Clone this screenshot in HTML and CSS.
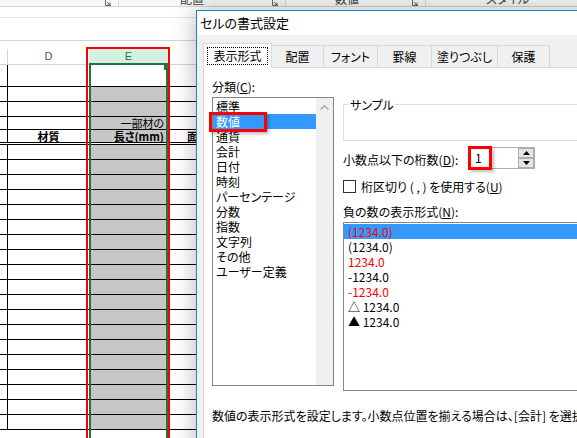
FILE: index.html
```html
<!DOCTYPE html>
<html lang="ja">
<head>
<meta charset="utf-8">
<link rel="stylesheet" href="styles.css">
</head>
<body>
<div class="ribbon">
  <div class="rgroup g1"><span class="launch"><svg width="6" height="6" viewBox="0 0 6 6"><path d="M0.5 0 V5.5 H6 M2 2 L5 5 M5 2.5 V5 H2.5" fill="none" stroke="#666" stroke-width="1"/></svg></span></div>
  <div class="rgroup g2"><span class="rlabel">配置</span><span class="launch"><svg width="6" height="6" viewBox="0 0 6 6"><path d="M0.5 0 V5.5 H6 M2 2 L5 5 M5 2.5 V5 H2.5" fill="none" stroke="#666" stroke-width="1"/></svg></span></div>
  <div class="rgroup g3"><span class="rlabel">数値</span><span class="launch"><svg width="6" height="6" viewBox="0 0 6 6"><path d="M0.5 0 V5.5 H6 M2 2 L5 5 M5 2.5 V5 H2.5" fill="none" stroke="#666" stroke-width="1"/></svg></span></div>
  <div class="rgroup g4"><span class="rlabel">スタイル</span></div>
</div>
<div class="fbar"></div>
<div class="fgap"></div>
<div class="hspace"></div>

<div class="sheet">
  <div class="hrow">
    <div class="hc"></div>
    <div class="hd">D</div>
    <div class="he">E</div>
    <div class="hf"></div>
  </div>
  <div class="row h21"><div class="c"></div><div class="d"></div><div class="e active"></div><div class="f"></div></div>
  <div class="row h14"><div class="c"></div><div class="d"></div><div class="e"></div><div class="f"></div></div>
  <div class="row h14"><div class="c"></div><div class="d"></div><div class="e"></div><div class="f"></div></div>
  <div class="row h12"><div class="c"></div><div class="d"></div><div class="e txt right">一部材の</div><div class="f"></div></div>
  <div class="row r5"><div class="c"></div><div class="d txt bold center">材質</div><div class="e txt bold right">長さ(mm)</div><div class="f txt bold fpad">面積</div></div>
  <div class="row h14"><div class="c"></div><div class="d"></div><div class="e"></div><div class="f"></div></div>
  <div class="row h14"><div class="c"></div><div class="d"></div><div class="e"></div><div class="f"></div></div>
  <div class="row h14"><div class="c"></div><div class="d"></div><div class="e"></div><div class="f"></div></div>
  <div class="row h14"><div class="c"></div><div class="d"></div><div class="e"></div><div class="f"></div></div>
  <div class="row h14"><div class="c"></div><div class="d"></div><div class="e"></div><div class="f"></div></div>
  <div class="row h14"><div class="c"></div><div class="d"></div><div class="e"></div><div class="f"></div></div>
  <div class="row h14"><div class="c"></div><div class="d"></div><div class="e"></div><div class="f"></div></div>
  <div class="row h14"><div class="c"></div><div class="d"></div><div class="e"></div><div class="f"></div></div>
  <div class="row h14"><div class="c"></div><div class="d"></div><div class="e"></div><div class="f"></div></div>
  <div class="row h14"><div class="c"></div><div class="d"></div><div class="e"></div><div class="f"></div></div>
  <div class="row h14"><div class="c"></div><div class="d"></div><div class="e"></div><div class="f"></div></div>
  <div class="row h14"><div class="c"></div><div class="d"></div><div class="e"></div><div class="f"></div></div>
  <div class="row h14"><div class="c"></div><div class="d"></div><div class="e"></div><div class="f"></div></div>
  <div class="row h14"><div class="c"></div><div class="d"></div><div class="e"></div><div class="f"></div></div>
  <div class="row h14"><div class="c"></div><div class="d"></div><div class="e"></div><div class="f"></div></div>
  <div class="row h14"><div class="c"></div><div class="d"></div><div class="e"></div><div class="f"></div></div>
  <div class="row h14"><div class="c"></div><div class="d"></div><div class="e"></div><div class="f"></div></div>
  <div class="row h14"><div class="c"></div><div class="d"></div><div class="e"></div><div class="f"></div></div>
  <div class="row h14"><div class="c"></div><div class="d"></div><div class="e"></div><div class="f"></div></div>
</div>
<div class="selbox"></div>
<div class="handle"></div>
<div class="mark mark-col"></div>

<div class="dialog">
  <div class="titlebar">セルの書式設定</div>
  <div class="dbody">
    <div class="tabs">
      <div class="tab tsel"><span class="focus">表示形式</span></div>
      <div class="tab w52">配置</div>
      <div class="tab w54">フォント</div>
      <div class="tab w54">罫線</div>
      <div class="tab w66">塗りつぶし</div>
      <div class="tab w52">保護</div>
    </div>
    <div class="panel">
      <div class="pgrid">
        <div class="lcol">
          <div class="lbl">分類(<u>C</u>):</div>
          <div class="catlist">
            <div class="catitems">
              <div class="ci">標準</div>
              <div class="ci ci-on">数値</div>
              <div class="ci">通貨</div>
              <div class="ci">会計</div>
              <div class="ci">日付</div>
              <div class="ci">時刻</div>
              <div class="ci">パーセンテージ</div>
              <div class="ci">分数</div>
              <div class="ci">指数</div>
              <div class="ci">文字列</div>
              <div class="ci">その他</div>
              <div class="ci">ユーザー定義</div>
            </div>
            <div class="vscroll"><svg width="9" height="5" viewBox="0 0 9 5"><path d="M0.5 4.5 L4.5 0.8 L8.5 4.5" fill="none" stroke="#a6a6a6" stroke-width="1.4"/></svg></div>
          </div>
        </div>
        <div class="rcol">
          <fieldset class="sample"><legend>サンプル</legend></fieldset>
          <div class="digits">
            <div class="dlbl">小数点以下の桁数(<u>D</u>):</div>
            <div class="spin">
              <div class="val">1</div>
              <div class="btns">
                <div class="sb"><svg width="7" height="4" viewBox="0 0 7 4"><path d="M0 4 L3.5 0 L7 4 Z" fill="#000"/></svg></div>
                <div class="sb"><svg width="7" height="4" viewBox="0 0 7 4"><path d="M0 0 L3.5 4 L7 0 Z" fill="#000"/></svg></div>
              </div>
            </div>
          </div>
          <div class="chk"><span class="box"></span><span>桁区切り ( , ) を使用する(<u>U</u>)</span></div>
          <div class="neglbl">負の数の表示形式(<u>N</u>):</div>
          <div class="neglist">
            <div class="it it-on red">(1234.0)</div>
            <div class="it">(1234.0)</div>
            <div class="it red">1234.0</div>
            <div class="it">-1234.0</div>
            <div class="it red">-1234.0</div>
            <div class="it">△ 1234.0</div>
            <div class="it">▲ 1234.0</div>
          </div>
        </div>
        <div class="desc">数値の表示形式を設定します。小数点位置を揃える場合は、[会計] を選択してください。</div>
      </div>
    </div>
  </div>
</div>

<div class="mark mark-num"></div>
<div class="mark mark-spin"></div>
</body>
</html>
```

FILE: styles.css
```css
html, body {
  margin: 0;
  padding: 0;
}
body {
  width: 577px;
  height: 438px;
  overflow: hidden;
  position: relative;
  background: #fff;
  font-family: "Noto Sans CJK JP", "Noto Sans", sans-serif;
  font-size: 12px;
  color: #000;
}

/* ribbon remnant */
.ribbon {
  height: 6px;
  display: flex;
  overflow: hidden;
  background: #f8f8f8;
  border-bottom: 1px solid #d5d5d5;
}
.rgroup {
  display: flex;
  align-items: flex-end;
  box-sizing: border-box;
  border-right: 1px solid #dadada;
}
.g1 { width: 119px; }
.g2 { width: 167px; padding-left: 61px; }
.g3 { width: 140px; padding-left: 49px; }
.g4 { flex: 1; padding-left: 60px; border-right: none; }
.rlabel {
  line-height: 14px;
  height: 14px;
  color: #444;
  font-size: 12px;
  white-space: nowrap;
  font-feature-settings: "palt";
}
.launch {
  margin-left: auto;
  margin-right: 7px;
  display: flex;
  align-items: flex-end;
  height: 6px;
}
.launch svg { display: block; }

.fbar {
  height: 10px;
  border-bottom: 1px solid #e3e3e3;
}
.fgap {
  height: 22px;
  border-bottom: 1px solid #d4d4d4;
}
.hspace { height: 8px; }

/* sheet */
.sheet {
  display: flex;
  flex-direction: column;
}
.hrow {
  display: flex;
  height: 16px;
}
.hrow > div {
  box-sizing: border-box;
  height: 16px;
  font-family: "Liberation Sans", Arial, sans-serif;
  font-size: 11px;
  line-height: 15px;
  text-align: center;
}
.hc {
  width: 8px;
  border-right: 1px solid #d4d4d4;
  border-bottom: 1px solid #d4d4d4;
}
.hd {
  width: 81px;
  color: #555;
  border-bottom: 1px solid #d4d4d4;
}
.he {
  width: 79px;
  background: #d3f0e0;
  color: #217346;
}
.hf {
  flex: 1;
  border-left: 1px solid #d4d4d4;
  border-bottom: 1px solid #d4d4d4;
}

.row {
  display: flex;
  border-bottom: 1px solid #000;
  flex-shrink: 0;
}
.h21 { height: 21px; }
.h14 { height: 14px; }
.h12 { height: 12px; }
.r5 { height: 12px; border-bottom: 3px double #000; }
.row > div { box-sizing: border-box; }
.c { width: 8px; border-right: 1px solid #000; }
.d { width: 81px; }
.e { width: 79px; background: #c6c6c6; }
.e.active { background: #fff; }
.f { flex: 1; }
.txt {
  font-size: 11px;
  line-height: 12px;
  white-space: nowrap;
  overflow: hidden;
  font-feature-settings: "palt";
}
.bold { font-weight: 700; }
.center { text-align: center; }
.right { text-align: right; padding-right: 4px; }
.fpad { padding-left: 19px; }

.selbox {
  position: absolute;
  left: 89px;
  top: 63px;
  width: 79px;
  height: 380px;
  box-sizing: border-box;
  border: 2px solid #217346;
  border-bottom: none;
}
.handle {
  position: absolute;
  left: 164px;
  top: 64px;
  width: 5px;
  height: 6px;
  background: #217346;
}

.mark {
  position: absolute;
  box-sizing: border-box;
  border: 2px solid #ff0000;
}
.mark-col {
  left: 86px;
  top: 47px;
  width: 84px;
  height: 400px;
}
.mark-num {
  left: 209px;
  top: 112px;
  width: 58px;
  height: 20px;
  border-width: 3px;
  box-shadow: 2px 2px 3px rgba(0, 0, 0, 0.25);
}
.mark-spin {
  left: 468px;
  top: 146px;
  width: 24px;
  height: 24px;
  border-width: 3px;
  box-shadow: 2px 2px 3px rgba(0, 0, 0, 0.25);
}

/* dialog */
.dialog {
  position: absolute;
  left: 196px;
  top: 10px;
  width: 420px;
  height: 440px;
  border-left: 1px solid #1883d7;
  border-top: 1px solid #1883d7;
  background: #f0f0f0;
  box-shadow: 0 0 22px rgba(0, 0, 0, 0.3);
  font-feature-settings: "palt";
}
.titlebar {
  height: 24px;
  background: #fff;
  padding-left: 3px;
  font-size: 13px;
  line-height: 24px;
}
.dbody {
  padding: 8px 0 0 6px;
}
.tabs {
  display: flex;
  align-items: flex-end;
  height: 24px;
}
.tab {
  box-sizing: border-box;
  height: 22px;
  border-top: 1px solid #d9d9d9;
  border-right: 1px solid #d9d9d9;
  background: #f0f0f0;
  display: flex;
  align-items: center;
  justify-content: center;
  font-size: 12px;
  white-space: nowrap;
}
.tsel {
  width: 69px;
  height: 25px;
  margin-bottom: -1px;
  border-left: 1px solid #d9d9d9;
  background: #fff;
  position: relative;
  z-index: 1;
}
.focus {
  border: 1px dotted #000;
  padding: 0 5px;
  line-height: 16px;
}
.w52 { width: 52px; }
.w54 { width: 54px; }
.w66 { width: 66px; }

.panel {
  box-sizing: border-box;
  height: 420px;
  border: 1px solid #d9d9d9;
  background: #fff;
  padding: 11px 0 0 8px;
}
.pgrid {
  display: grid;
  grid-template-columns: 122px 1fr;
  column-gap: 9px;
}
.lbl {
  line-height: 15px;
  margin-bottom: 3px;
}
.catlist {
  box-sizing: border-box;
  height: 289px;
  border: 1px solid #828790;
  display: flex;
}
.catitems {
  flex: 1;
  padding-top: 1px;
}
.ci {
  height: 15px;
  line-height: 15px;
  padding-left: 3px;
  white-space: nowrap;
}
.ci-on {
  background: #3399ff;
  color: #fff;
}
.vscroll {
  width: 17px;
  background: #f0f0f0;
  display: flex;
  justify-content: center;
  align-items: flex-start;
  padding-top: 7px;
  box-sizing: border-box;
}
.vscroll svg { display: block; }

.rcol {
  display: flex;
  flex-direction: column;
  min-width: 0;
}
.sample {
  margin: 18px 0 0;
  padding: 0;
  border: 1px solid #dcdcdc;
  height: 44px;
  box-sizing: border-box;
  min-inline-size: 0;
}
.sample legend {
  padding: 0 1px;
  margin-left: 5px;
  line-height: 15px;
  font-size: 12px;
}
.digits {
  display: flex;
  align-items: flex-start;
  margin-top: 6px;
  height: 22px;
}
.dlbl {
  width: 125px;
  margin-top: 5px;
  line-height: 15px;
  white-space: nowrap;
}
.spin {
  box-sizing: border-box;
  width: 67px;
  height: 22px;
  border: 1px solid #adadad;
  display: flex;
  background: #fff;
}
.val {
  flex: 1;
  padding-left: 6px;
  line-height: 20px;
  font-size: 12px;
}
.btns {
  width: 16px;
  display: flex;
  flex-direction: column;
}
.sb {
  box-sizing: border-box;
  height: 10px;
  background: #e5e5e5;
  border: 1px solid #adadad;
  display: flex;
  align-items: center;
  justify-content: center;
}
.sb svg { display: block; }
.chk {
  display: flex;
  align-items: center;
  margin-top: 10px;
  height: 15px;
  line-height: 15px;
  white-space: nowrap;
}
.box {
  box-sizing: border-box;
  width: 13px;
  height: 13px;
  border: 1px solid #333;
  background: #fff;
  margin-right: 5px;
  flex-shrink: 0;
}
.neglbl {
  margin-top: 10px;
  line-height: 15px;
}
.neglist {
  box-sizing: border-box;
  margin-top: 3px;
  height: 169px;
  border: 1px solid #828790;
  padding-top: 1px;
}
.it {
  height: 15px;
  line-height: 15px;
  padding-left: 4px;
  white-space: nowrap;
}
.it-on { background: #3399ff; }
.red { color: #ff0000; }
.desc {
  grid-column: 1 / span 2;
  margin-top: 17px;
  line-height: 15px;
  white-space: nowrap;
}
```
